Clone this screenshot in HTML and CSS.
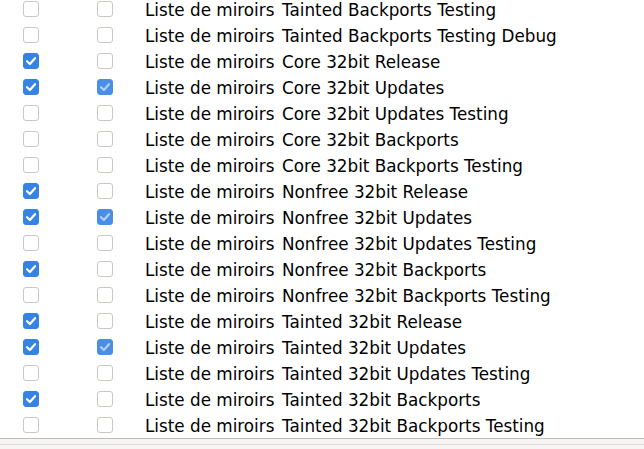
FILE: index.html
```html
<!DOCTYPE html>
<html lang="fr">
<head>
<meta charset="utf-8">
<title>Liste de miroirs</title>
<link rel="stylesheet" href="styles.css">
</head>
<body>
<div class="view">
  <div class="list">
    <div class="row"><span class="cb"></span><span class="cb"></span><span class="c1">Liste de miroirs</span><span class="c2">Tainted Backports Testing</span></div>
    <div class="row"><span class="cb"></span><span class="cb"></span><span class="c1">Liste de miroirs</span><span class="c2">Tainted Backports Testing Debug</span></div>
    <div class="row"><span class="cb on"></span><span class="cb"></span><span class="c1">Liste de miroirs</span><span class="c2">Core 32bit Release</span></div>
    <div class="row"><span class="cb on"></span><span class="cb on dim"></span><span class="c1">Liste de miroirs</span><span class="c2">Core 32bit Updates</span></div>
    <div class="row"><span class="cb"></span><span class="cb"></span><span class="c1">Liste de miroirs</span><span class="c2">Core 32bit Updates Testing</span></div>
    <div class="row"><span class="cb"></span><span class="cb"></span><span class="c1">Liste de miroirs</span><span class="c2">Core 32bit Backports</span></div>
    <div class="row"><span class="cb"></span><span class="cb"></span><span class="c1">Liste de miroirs</span><span class="c2">Core 32bit Backports Testing</span></div>
    <div class="row"><span class="cb on"></span><span class="cb"></span><span class="c1">Liste de miroirs</span><span class="c2">Nonfree 32bit Release</span></div>
    <div class="row"><span class="cb on"></span><span class="cb on dim"></span><span class="c1">Liste de miroirs</span><span class="c2">Nonfree 32bit Updates</span></div>
    <div class="row"><span class="cb"></span><span class="cb"></span><span class="c1">Liste de miroirs</span><span class="c2">Nonfree 32bit Updates Testing</span></div>
    <div class="row"><span class="cb on"></span><span class="cb"></span><span class="c1">Liste de miroirs</span><span class="c2">Nonfree 32bit Backports</span></div>
    <div class="row"><span class="cb"></span><span class="cb"></span><span class="c1">Liste de miroirs</span><span class="c2">Nonfree 32bit Backports Testing</span></div>
    <div class="row"><span class="cb on"></span><span class="cb"></span><span class="c1">Liste de miroirs</span><span class="c2">Tainted 32bit Release</span></div>
    <div class="row"><span class="cb on"></span><span class="cb on dim"></span><span class="c1">Liste de miroirs</span><span class="c2">Tainted 32bit Updates</span></div>
    <div class="row"><span class="cb"></span><span class="cb"></span><span class="c1">Liste de miroirs</span><span class="c2">Tainted 32bit Updates Testing</span></div>
    <div class="row"><span class="cb on"></span><span class="cb"></span><span class="c1">Liste de miroirs</span><span class="c2">Tainted 32bit Backports</span></div>
    <div class="row"><span class="cb"></span><span class="cb"></span><span class="c1">Liste de miroirs</span><span class="c2">Tainted 32bit Backports Testing</span></div>
  </div>
</div>
<div class="footer"><div class="inner"></div></div>
</body>
</html>
```

FILE: styles.css
```css
html, body {
  margin: 0;
  padding: 0;
  background: #ffffff;
  font-family: "DejaVu Sans", sans-serif;
  font-size: 16.8px;
  color: #000000;
}
.view {
  height: 438px;
  overflow: hidden;
  background: #ffffff;
}
.list {
  margin-top: -4px;
}
.row {
  display: flex;
  align-items: center;
  height: 26px;
  padding-left: 23px;
  white-space: nowrap;
}
.cb {
  box-sizing: border-box;
  width: 16px;
  height: 16px;
  border: 1px solid #cdc7c2;
  border-radius: 3px;
  background: #ffffff;
  flex: none;
}
.cb + .cb {
  margin-left: 58px;
}
.cb.on {
  border-color: #3584e4;
  background-color: #3584e4;
  background-image: url("data:image/svg+xml;utf8,<svg xmlns='http://www.w3.org/2000/svg' viewBox='0 0 16 16'><path d='M4 8.2 L6.9 11 L12 5.2' fill='none' stroke='white' stroke-width='2.2' stroke-linecap='round' stroke-linejoin='round'/></svg>");
  background-size: 16px 16px;
  background-position: center;
}
.cb.on.dim {
  border-color: #4a8fe6;
  background-color: #4a8fe6;
  background-image: url("data:image/svg+xml;utf8,<svg xmlns='http://www.w3.org/2000/svg' viewBox='0 0 16 16'><path d='M4 8.2 L6.9 11 L12 5.2' fill='none' stroke='%23b3d0f5' stroke-width='2.2' stroke-linecap='round' stroke-linejoin='round'/></svg>");
}
.c1,
.c2 {
  padding-top: 2px;
  flex: none;
}
.c1 {
  margin-left: 32px;
  width: 137px;
}
.footer {
  height: 11px;
  border-top: 1px solid #c0bdb8;
  background: #f6f5f4;
  box-sizing: border-box;
  padding-top: 5px;
}
.footer .inner {
  border-top: 1px solid #dedad6;
}
```
